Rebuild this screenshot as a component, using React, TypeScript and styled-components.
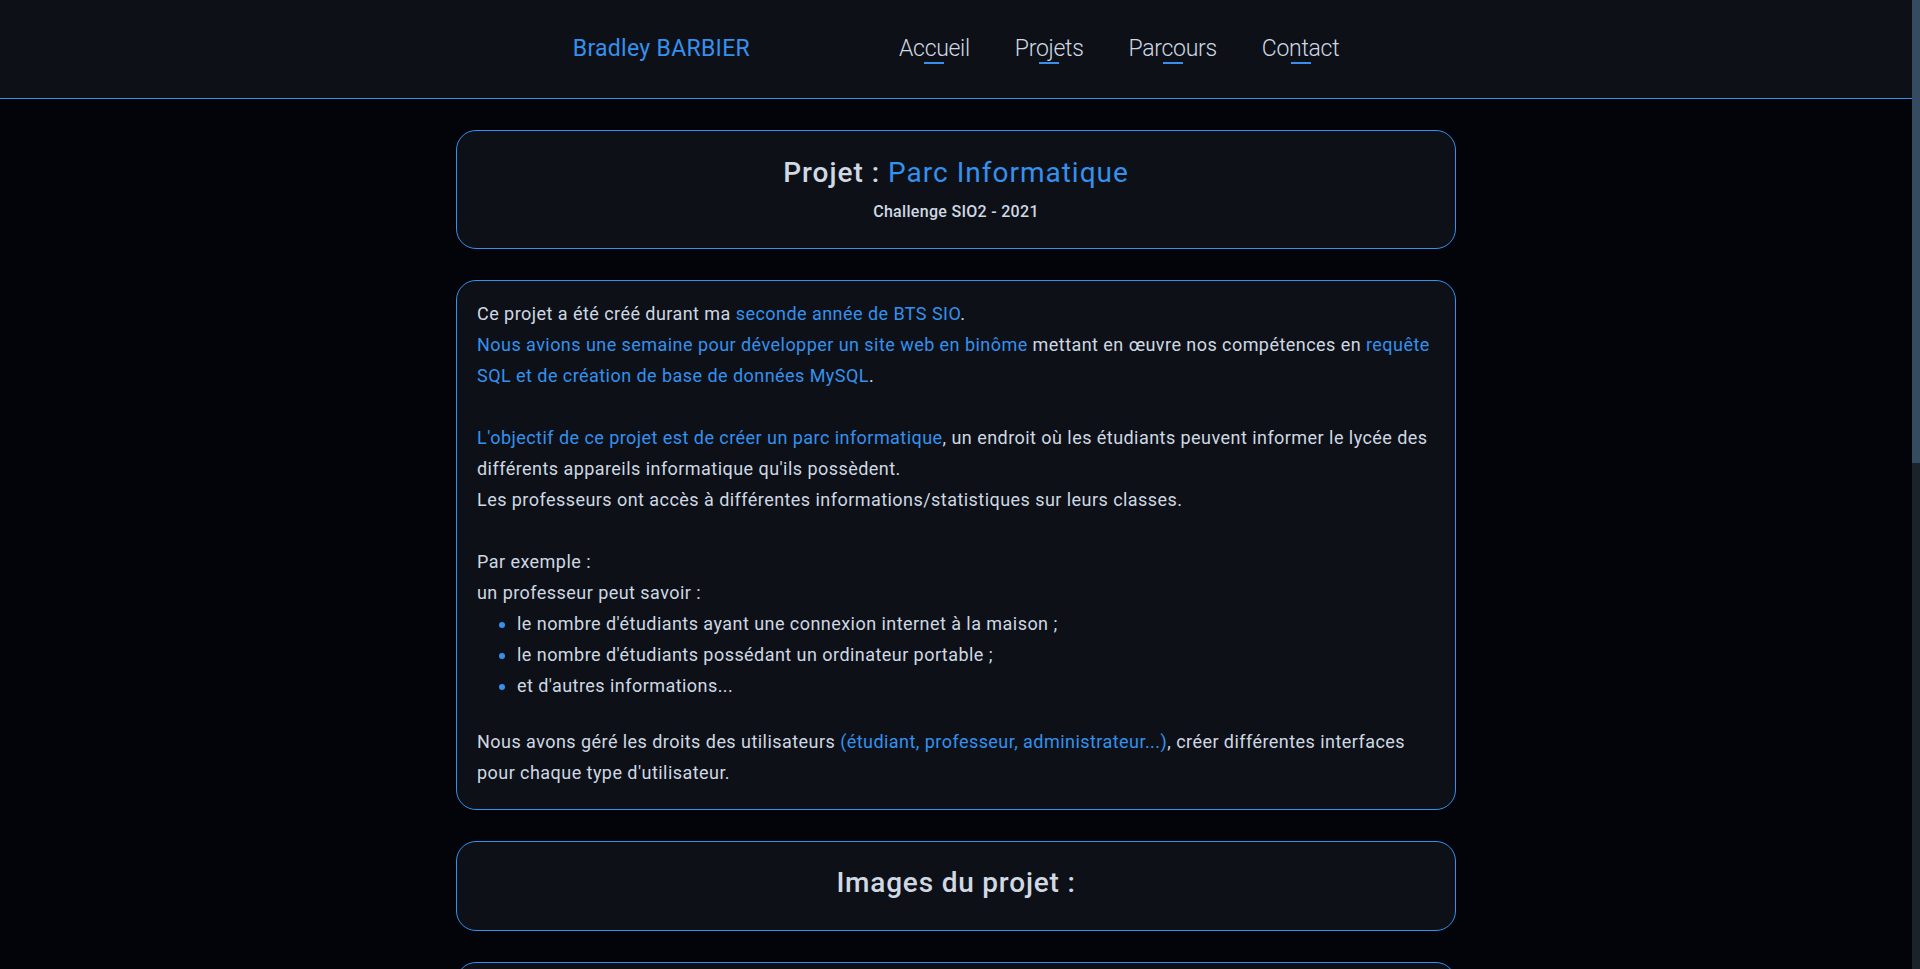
import styled, { createGlobalStyle } from "styled-components";

const BLUE = "#3590ee";
const TEXT = "#cfd8e3";

const GlobalStyle = createGlobalStyle`
  html, body {
    margin: 0;
    padding: 0;
    height: 100%;
    overflow: hidden;
    background-color: #02040a;
    font-family: Roboto, "Liberation Sans", sans-serif;
    color: ${TEXT};
  }
`;

interface NavItem {
  label: string;
}

const NAV: NavItem[] = [
  { label: "Accueil" },
  { label: "Projets" },
  { label: "Parcours" },
  { label: "Contact" },
];

const App = () => {
  return (
    <>
      <GlobalStyle />
      <Page>
        <Content>
          <Header>
            <Brand href="#">Bradley BARBIER</Brand>
            <Nav>
              {NAV.map((item) => (
                <NavLink key={item.label} href="#">
                  {item.label}
                </NavLink>
              ))}
            </Nav>
          </Header>

          <Main>
            <TitleCard>
              <ProjectTitle>
                Projet : <Blue>Parc Informatique</Blue>
              </ProjectTitle>
              <SubTitle>Challenge SIO2 - 2021</SubTitle>
            </TitleCard>

            <TextCard>
              <Paragraph>
                Ce projet a été créé durant ma <Blue>seconde année de BTS SIO</Blue>.
                <br />
                <Blue>Nous avions une semaine pour développer un site web en binôme</Blue>{" "}
                mettant en œuvre nos compétences en{" "}
                <Blue>requête SQL et de création de base de données MySQL</Blue>.
                <br />
                <br />
                <Blue>L'objectif de ce projet est de créer un parc informatique</Blue>, un
                endroit où les étudiants peuvent informer le lycée des différents
                appareils informatique qu'ils possèdent.
                <br />
                Les professeurs ont accès à différentes informations/statistiques sur
                leurs classes.
                <br />
                <br />
                Par exemple :
                <br />
                un professeur peut savoir :
              </Paragraph>
              <List>
                <li>le nombre d'étudiants ayant une connexion internet à la maison ;</li>
                <li>le nombre d'étudiants possédant un ordinateur portable ;</li>
                <li>et d'autres informations...</li>
              </List>
              <Paragraph>
                Nous avons géré les droits des utilisateurs{" "}
                <Blue>(étudiant, professeur, administrateur...)</Blue>, créer
                différentes interfaces pour chaque type d'utilisateur.
              </Paragraph>
            </TextCard>

            <HeadingCard>
              <SectionTitle>Images du projet :</SectionTitle>
            </HeadingCard>

            <GalleryCard>
              <Shot />
              <Shot />
              <Shot />
            </GalleryCard>
          </Main>
        </Content>

        <ScrollTrack>
          <ScrollThumb />
        </ScrollTrack>
      </Page>
    </>
  );
};

export default App;

const Page = styled.div`
  display: flex;
  height: 100vh;
  background-color: #02040a;
`;

const Content = styled.div`
  flex: 1;
  min-width: 0;
  overflow: hidden;
`;

const ScrollTrack = styled.aside`
  width: 8px;
  flex-shrink: 0;
  background-color: #1b2229;
`;

const ScrollThumb = styled.div`
  height: 463px;
  background-color: #344b60;
`;

const Header = styled.header`
  display: flex;
  align-items: center;
  justify-content: center;
  gap: 149px;
  height: 99px;
  background-color: #0d1117;
  border-bottom: 1px solid ${BLUE};
  box-sizing: border-box;
  padding-bottom: 2px;
`;

const Brand = styled.a`
  color: ${BLUE};
  font-size: 23px;
  text-decoration: none;
  letter-spacing: 0.3px;
`;

const Nav = styled.nav`
  display: flex;
  gap: 45px;
`;

const NavLink = styled.a`
  position: relative;
  color: ${TEXT};
  font-size: 23px;
  font-weight: 300;
  letter-spacing: -0.3px;
  text-decoration: none;

  &::after {
    content: "";
    position: absolute;
    left: 50%;
    bottom: -2px;
    width: 20px;
    height: 2px;
    margin-left: -10px;
    background-color: ${BLUE};
  }
`;

const Main = styled.main`
  display: flex;
  flex-direction: column;
  align-items: center;
  gap: 31px;
  padding: 31px 0 40px;
`;

const Card = styled.section`
  width: 1000px;
  box-sizing: border-box;
  background-color: #0d1117;
  border: 1px solid ${BLUE};
  border-radius: 20px;
`;

const TitleCard = styled(Card)`
  display: flex;
  flex-direction: column;
  align-items: center;
  gap: 12px;
  padding: 25px 20px 27px;
`;

const ProjectTitle = styled.h1`
  margin: 0;
  font-size: 28px;
  line-height: 34px;
  font-weight: 500;
  letter-spacing: 1px;
  color: ${TEXT};
`;

const Blue = styled.span`
  color: ${BLUE};
  font-weight: 400;
`;

const SubTitle = styled.p`
  margin: 0;
  font-size: 16px;
  line-height: 19px;
  font-weight: 500;
  letter-spacing: 0.3px;
`;

const TextCard = styled(Card)`
  padding: 17px 20px 21px;
  font-size: 18px;
  line-height: 31px;
  letter-spacing: 0.45px;
`;

const Paragraph = styled.p`
  margin: 0;
`;

const List = styled.ul`
  margin: 0 0 25px;
  padding-left: 40px;

  li::marker {
    color: ${BLUE};
  }
`;

const HeadingCard = styled(Card)`
  display: flex;
  justify-content: center;
  padding: 24px 20px 30px;
`;

const SectionTitle = styled.h2`
  margin: 0;
  font-size: 28px;
  line-height: 34px;
  font-weight: 500;
  letter-spacing: 0.8px;
  color: ${TEXT};
`;

const GalleryCard = styled(Card)`
  display: flex;
  flex-direction: column;
  gap: 30px;
  padding: 30px;
`;

const Shot = styled.div`
  height: 300px;
  border-radius: 10px;
  background-color: #161b22;
`;
